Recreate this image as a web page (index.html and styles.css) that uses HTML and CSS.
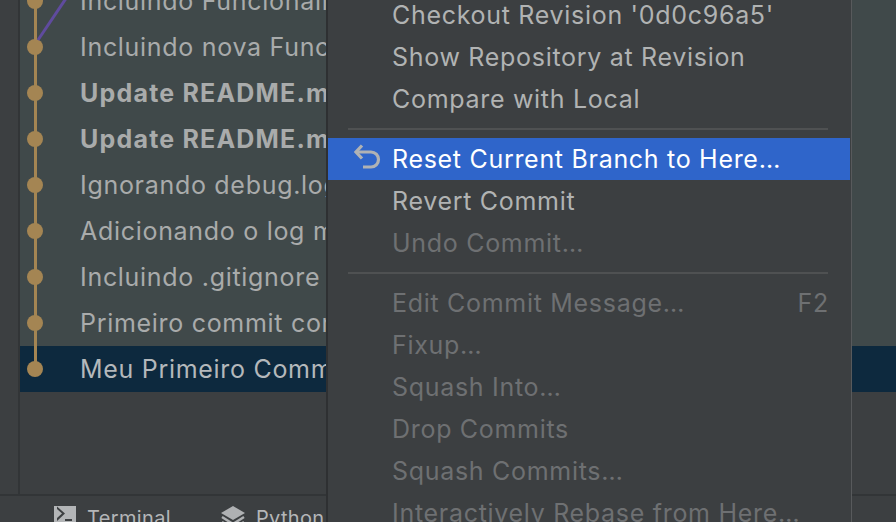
FILE: index.html
```html
<!DOCTYPE html>
<html>
	<head>
		<meta charset="utf-8">
		<title>Git log</title>
		<link rel="stylesheet" href="styles.css">
	</head>
	<body>
		<div class="main">
			<div class="side-strip"></div>
			<div class="log-panel">
				<div class="commit-list">
					<div class="commit-row"><span class="graph"><span class="dot"></span></span><span class="commit-text">Incluindo Funcionalidade</span></div>
					<div class="commit-row"><span class="graph"><span class="dot"></span></span><span class="commit-text">Incluindo nova Funcionalidade</span></div>
					<div class="commit-row"><span class="graph"><span class="dot"></span></span><span class="commit-text commit-bold">Update README.md</span></div>
					<div class="commit-row"><span class="graph"><span class="dot"></span></span><span class="commit-text commit-bold">Update README.md</span></div>
					<div class="commit-row"><span class="graph"><span class="dot"></span></span><span class="commit-text">Ignorando debug.log</span></div>
					<div class="commit-row"><span class="graph"><span class="dot"></span></span><span class="commit-text">Adicionando o log mais</span></div>
					<div class="commit-row"><span class="graph"><span class="dot"></span></span><span class="commit-text">Incluindo .gitignore no</span></div>
					<div class="commit-row"><span class="graph"><span class="dot"></span></span><span class="commit-text">Primeiro commit com</span></div>
					<div class="commit-row commit-selected"><span class="graph graph-last"><span class="dot"></span></span><span class="commit-text">Meu Primeiro Commit</span></div>
				</div>
				<svg class="branch-line" width="60" height="44" viewBox="0 0 60 44">
					<path d="M51 -9 L18 40" stroke="#5f4b9e" stroke-width="3" fill="none"/>
				</svg>
			</div>
		</div>

		<div class="tool-bar">
			<span class="tool-cut">s</span>
			<span class="tool-item">
				<svg class="tool-icon" width="22" height="22" viewBox="0 0 22 22">
					<path d="M0 0H22V22H0Z M3 3 L8 7.500 L3 12 L3 15 L11 7.500 L3 0.500Z M11 13 H18 V15 H11Z" fill="#b3b5b7" fill-rule="evenodd"/>
				</svg>
				Terminal
			</span>
			<span class="tool-item">
				<svg class="tool-icon" width="24" height="24" viewBox="0 0 24 24">
					<path d="M12 0 L24 7 L12 14 L0 7Z" fill="#afb1b3"/>
					<path d="M1 11 L12 18 L23 11" stroke="#afb1b3" stroke-width="2.500" fill="none"/>
					<path d="M1 16 L12 23 L23 16" stroke="#afb1b3" stroke-width="2.500" fill="none"/>
				</svg>
				Python Console
			</span>
		</div>

		<div class="context-menu">
			<div class="menu-item">Checkout Revision '0d0c96a5'</div>
			<div class="menu-item">Show Repository at Revision</div>
			<div class="menu-item">Compare with Local</div>
			<div class="menu-sep"></div>
			<div class="menu-item menu-active">
				<svg class="menu-icon" width="28" height="28" viewBox="0 0 28 28">
					<path d="M8 1.500 L2 8 L8 14.500" stroke="#b0b2b4" stroke-width="3.200" fill="none"/>
					<path d="M2 8 H17 A7.500 7.500 0 0 1 17 23 H9" stroke="#b0b2b4" stroke-width="3.200" fill="none"/>
				</svg>
				Reset Current Branch to Here…
			</div>
			<div class="menu-item">Revert Commit</div>
			<div class="menu-item menu-disabled">Undo Commit…</div>
			<div class="menu-sep"></div>
			<div class="menu-item menu-disabled">Edit Commit Message…<span class="menu-key">F2</span></div>
			<div class="menu-item menu-disabled">Fixup…</div>
			<div class="menu-item menu-disabled">Squash Into…</div>
			<div class="menu-item menu-disabled">Drop Commits</div>
			<div class="menu-item menu-disabled">Squash Commits…</div>
			<div class="menu-item menu-disabled">Interactively Rebase from Here…</div>
		</div>
	</body>
</html>
```

FILE: styles.css
```css
html, body {
	margin: 0;
	height: 100%;
}

body {
	width: 896px;
	height: 522px;
	overflow: hidden;
	position: relative;
	display: flex;
	flex-direction: column;
	background: #3c3f41;
	font-family: "Inter", "Liberation Sans", sans-serif;
	font-size: 25px;
	letter-spacing: 0.7px;
}

.main {
	flex: 1;
	display: flex;
	min-height: 0;
}

.side-strip {
	width: 18px;
	flex-shrink: 0;
	border-right: 2px solid #323537;
}

.log-panel {
	flex: 1;
	position: relative;
	overflow: hidden;
}

.commit-list {
	margin-top: -22px;
}

.commit-row {
	height: 46px;
	display: flex;
	align-items: center;
	background: #40494a;
	color: #a9abab;
	white-space: nowrap;
}

.commit-selected {
	background: #0d293e;
	color: #b4b8bb;
}

.commit-bold {
	font-weight: 700;
	letter-spacing: 1.2px;
}

.graph {
	width: 60px;
	height: 100%;
	flex-shrink: 0;
	position: relative;
}

.graph::before {
	content: "";
	position: absolute;
	left: 14px;
	top: 0;
	bottom: 0;
	width: 2.500px;
	background: #a48553;
}

.graph-last::before {
	bottom: 50%;
}

.dot {
	position: absolute;
	left: 7px;
	top: 15px;
	width: 16px;
	height: 16px;
	border-radius: 50%;
	background: #a48553;
}

.branch-line {
	position: absolute;
	left: 0;
	top: 0;
}

.tool-bar {
	height: 28px;
	box-sizing: border-box;
	flex-shrink: 0;
	border-top: 2px solid #323537;
	display: flex;
	padding-top: 10px;
	color: #b4b6b8;
	font-size: 20px;
	letter-spacing: 0.35px;
	white-space: nowrap;
	overflow: hidden;
}

.tool-cut {
	margin-left: -11px;
	width: 65px;
	line-height: 24px;
}

.tool-item {
	display: flex;
	align-items: flex-start;
	gap: 11px;
	line-height: 24px;
	margin-right: 50px;
}

.tool-icon {
	flex-shrink: 0;
}

.context-menu {
	position: absolute;
	left: 326px;
	top: -6px;
	width: 523px;
	height: 540px;
	background: #3c3f41;
	border-left: 2px solid #2e3032;
	border-right: 1px solid #585a5c;
	color: #b1b3b3;
}

.menu-item {
	height: 42px;
	display: flex;
	align-items: center;
	padding-left: 64px;
	padding-right: 22px;
	position: relative;
	white-space: nowrap;
}

.menu-sep {
	height: 18px;
	display: flex;
	align-items: center;
	margin: 0 23px 0 20px;
}

.menu-sep::before {
	content: "";
	flex: 1;
	height: 2px;
	background: #4f5152;
}

.menu-active {
	background: #2f65ca;
	color: #fff;
	margin-right: 1px;
}

.menu-disabled {
	color: #6e7072;
}

.menu-icon {
	position: absolute;
	left: 26px;
	top: 6px;
}

.menu-key {
	margin-left: auto;
}
```
